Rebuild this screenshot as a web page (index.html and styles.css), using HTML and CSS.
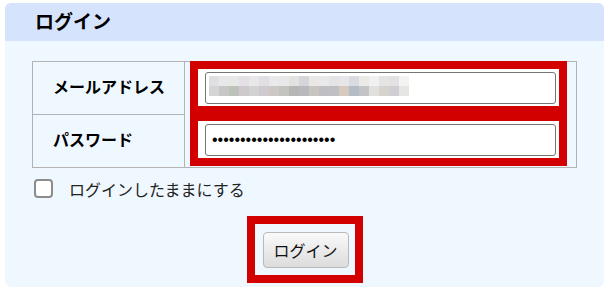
FILE: index.html
```html
<!DOCTYPE html>
<html lang="ja">
<head>
  <meta charset="UTF-8">
  <title>ログイン</title>
  <link rel="stylesheet" href="styles.css">
</head>
<body>

  <div class="panel">
    <h2 class="panel-title">ログイン</h2>

    <div class="panel-body">
      <div class="login-table">
        <div class="labels">
          <div class="label">メールアドレス</div>
          <div class="label">パスワード</div>
        </div>

        <div class="fields">
          <div class="mark">
            <div class="field-box">
              <div class="field">
                <!-- blurred address -->
                <svg class="mosaic" width="200" height="20" viewBox="0 0 200 20">
                  <rect x="0" y="0" width="10" height="10" fill="#e0dfe1"/>
                  <rect x="10" y="0" width="10" height="10" fill="#e8e8ea"/>
                  <rect x="20" y="0" width="10" height="10" fill="#e6e9e6"/>
                  <rect x="30" y="0" width="10" height="10" fill="#e5e0e5"/>
                  <rect x="40" y="0" width="10" height="10" fill="#e8e8e8"/>
                  <rect x="50" y="0" width="10" height="10" fill="#e2dfe4"/>
                  <rect x="60" y="0" width="10" height="10" fill="#e9e9eb"/>
                  <rect x="70" y="0" width="10" height="10" fill="#e8e8e8"/>
                  <rect x="80" y="0" width="10" height="10" fill="#e2e2e0"/>
                  <rect x="90" y="0" width="10" height="10" fill="#d5d6da"/>
                  <rect x="100" y="0" width="10" height="10" fill="#e9e8e6"/>
                  <rect x="110" y="0" width="10" height="10" fill="#e9e9eb"/>
                  <rect x="120" y="0" width="10" height="10" fill="#e6e3e6"/>
                  <rect x="130" y="0" width="10" height="10" fill="#e8e6e9"/>
                  <rect x="140" y="0" width="10" height="10" fill="#d8dce1"/>
                  <rect x="150" y="0" width="10" height="10" fill="#eaebe9"/>
                  <rect x="160" y="0" width="10" height="10" fill="#f1f1f1"/>
                  <rect x="170" y="0" width="10" height="10" fill="#e4e4e4"/>
                  <rect x="180" y="0" width="10" height="10" fill="#e3e1e4"/>
                  <rect x="190" y="0" width="10" height="10" fill="#f2f4f2"/>
                  <rect x="0" y="10" width="10" height="10" fill="#d5d5d5"/>
                  <rect x="10" y="10" width="10" height="10" fill="#c7c7c5"/>
                  <rect x="20" y="10" width="10" height="10" fill="#bdc3b8"/>
                  <rect x="30" y="10" width="10" height="10" fill="#cfc8cd"/>
                  <rect x="40" y="10" width="10" height="10" fill="#d1d2d1"/>
                  <rect x="50" y="10" width="10" height="10" fill="#cfcacd"/>
                  <rect x="60" y="10" width="10" height="10" fill="#cdc7c5"/>
                  <rect x="70" y="10" width="10" height="10" fill="#c3c3bf"/>
                  <rect x="80" y="10" width="10" height="10" fill="#b6b6b4"/>
                  <rect x="90" y="10" width="10" height="10" fill="#b9b9bb"/>
                  <rect x="100" y="10" width="10" height="10" fill="#c8c4c0"/>
                  <rect x="110" y="10" width="10" height="10" fill="#c0bec3"/>
                  <rect x="120" y="10" width="10" height="10" fill="#c0bfc3"/>
                  <rect x="130" y="10" width="10" height="10" fill="#d7c9bd"/>
                  <rect x="140" y="10" width="10" height="10" fill="#b3bdc6"/>
                  <rect x="150" y="10" width="10" height="10" fill="#c4c4c6"/>
                  <rect x="160" y="10" width="10" height="10" fill="#e0e0df"/>
                  <rect x="170" y="10" width="10" height="10" fill="#d6d2cc"/>
                  <rect x="180" y="10" width="10" height="10" fill="#d0cdd4"/>
                  <rect x="190" y="10" width="10" height="10" fill="#e6e6e5"/>
                </svg>
              </div>
            </div>
            <div class="field-box">
              <input class="field password" type="password" value="abcdefghijklmnopqrstuv">
            </div>
          </div>
        </div>
      </div>

      <label class="remember">
        <input type="checkbox" class="check">
        <span>ログインしたままにする</span>
      </label>

      <div class="submit-row">
        <div class="mark mark-button">
          <button class="login-btn">ログイン</button>
        </div>
      </div>
    </div>
  </div>

</body>
</html>
```

FILE: styles.css
```css
body {
  margin: 0;
  padding: 3px 5px;
  font-family: "Liberation Sans", "Noto Sans CJK JP", sans-serif;
  background-color: #fff;
  color: #111;
}

.panel {
  background-color: #f0f8ff;
  border-radius: 6px;
  overflow: hidden;
}

.panel-title {
  margin: 0;
  height: 38px;
  line-height: 39px;
  padding-left: 30px;
  font-size: 19px;
  font-weight: bold;
  color: #000;
  background-color: #d5e3fd;
}

.panel-body {
  padding: 20px 27px 4px;
}

.login-table {
  display: grid;
  grid-template-columns: 152px 1fr;
  border: 1px solid #b3b3b3;
}

.labels {
  border-right: 1px solid #b3b3b3;
}

.label {
  height: 52px;
  line-height: 52px;
  padding-left: 20px;
  font-size: 16px;
  font-weight: bold;
  color: #000;
}

.label:first-child {
  border-bottom: 1px solid #b3b3b3;
}

.mark {
  background-color: #d30000;
  padding: 8px;
}

.fields .mark {
  margin: -1px 9px 1px 5px;
  display: flex;
  flex-direction: column;
  gap: 15px;
}

.field-box {
  background-color: #fff;
  padding: 3px 3px 2px 7px;
}

.field {
  display: block;
  box-sizing: border-box;
  width: 100%;
  height: 32px;
  margin: 0;
  border: 1px solid #767676;
  border-radius: 3px;
  background: #fff;
}

.mosaic {
  display: block;
  margin: 3px 0 0 3px;
}

.password {
  padding: 0 6px;
  font-family: "Liberation Sans", sans-serif;
  font-size: 16px;
  color: #000;
}

.remember {
  display: flex;
  align-items: center;
  gap: 16px;
  margin: 11px 0 0 2px;
  height: 19px;
  font-size: 16px;
  color: #222;
}

.check {
  appearance: none;
  margin: 0;
  width: 19px;
  height: 19px;
  box-sizing: border-box;
  border: 2px solid #8c8c8c;
  border-radius: 4px;
  background: #fff;
}

.submit-row {
  margin-top: 18px;
  text-align: center;
}

.mark-button {
  display: inline-block;
  padding: 8px 6px 7px 8px;
  background-color: #f0f8ff;
  border: 8px solid #d30000;
}

.login-btn {
  display: block;
  width: 86px;
  height: 36px;
  border: 1px solid #b9b9b9;
  border-radius: 4px;
  background: linear-gradient(#fafafa, #dcdcdc);
  font-family: "Liberation Sans", "Noto Sans CJK JP", sans-serif;
  font-size: 16px;
  color: #111;
  cursor: pointer;
}
```
